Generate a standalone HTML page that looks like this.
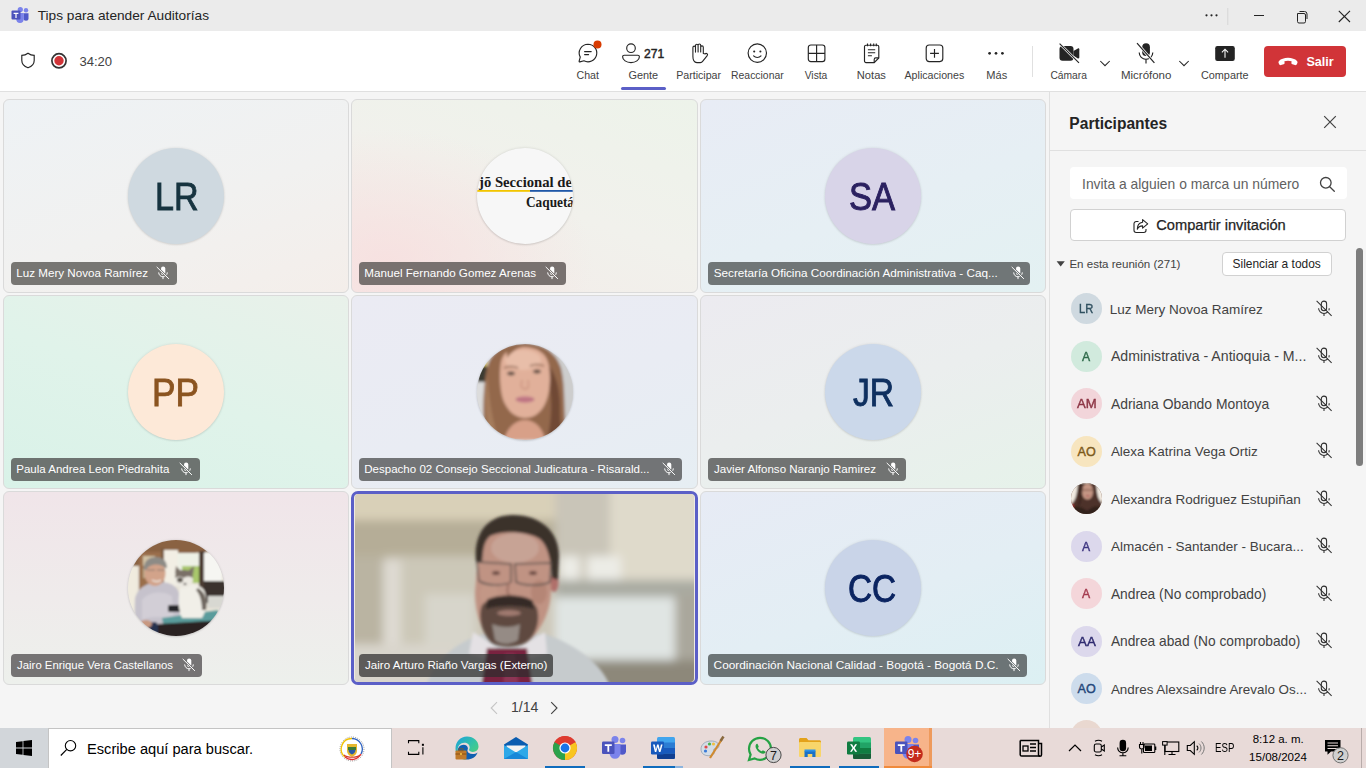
<!DOCTYPE html>
<html><head><meta charset="utf-8">
<style>
*{box-sizing:border-box}
html,body{margin:0;padding:0}
body{width:1366px;height:768px;overflow:hidden;position:relative;background:#f5f5f5;font-family:"Liberation Sans",sans-serif;color:#242424}
.a{position:absolute;display:block}
.t{position:absolute;white-space:pre}
</style></head><body>
<div class="a" style="left:0px;top:0px;width:1366px;height:31px;background:#ebebeb"></div>
<svg class="a" style="left:11px;top:7px;" width="18" height="16" viewBox="0 0 18 16"><circle cx="15" cy="3.2" r="2.2" fill="#7b83eb"/><path d="M12.5 6.2h5v5a2.5 2.5 0 0 1-5 0z" fill="#5059c9"/><circle cx="9.3" cy="2.6" r="2.6" fill="#7b83eb"/><path d="M5.5 6h7.2v6.2a3.7 3.7 0 0 1-7.4 0z" fill="#7b83eb"/><rect x="0.5" y="3.6" width="9" height="9" rx="1" fill="#4b53bc"/><path d="M2.6 5.8h4.8v1.1H5.6v4H4.4v-4H2.6z" fill="#fff"/></svg>
<div class="t" style="left:37.73px;top:8.80px;font-size:13.68px;line-height:13.68px;color:#242424;font-weight:400;font-family:'Liberation Sans',sans-serif;">Tips para atender Auditorías</div>
<svg class="a" style="left:1200px;top:8px" width="166" height="18" viewBox="0 0 166 18"><circle cx="6.5" cy="7.3" r="1.1" fill="#242424"/><circle cx="11.5" cy="7.3" r="1.1" fill="#242424"/><circle cx="16.5" cy="7.3" r="1.1" fill="#242424"/><rect x="27.3" y="-3" width="1" height="20" fill="#d6d6d6"/><rect x="54" y="7" width="10" height="1" fill="#242424"/><path d="M97.5 5.5h6.5a1.5 1.5 0 0 1 1.5 1.5v6.5a1.5 1.5 0 0 1-1.5 1.5h-5a1.5 1.5 0 0 1-1.5-1.5z" fill="none" stroke="#242424" stroke-width="1"/><path d="M99.5 3.5h5a2.5 2.5 0 0 1 2.5 2.5v5" fill="none" stroke="#242424" stroke-width="1"/><path d="M138.8 2.8l11.2 11.2M150 2.8l-11.2 11.2" stroke="#242424" stroke-width="1.1"/></svg>
<div class="a" style="left:0px;top:31px;width:1366px;height:60px;background:#fff"></div>
<div class="a" style="left:0px;top:91px;width:1366px;height:1px;background:#e0e0e0"></div>
<svg class="a" style="left:20px;top:52px;" width="16" height="17" viewBox="0 0 16 17"><path d="M8 1.2c1.8 1.3 3.8 2.1 6.2 2.2v5c0 3.6-2.3 5.9-6.2 7.4C4.1 14.3 1.8 12 1.8 8.4v-5C4.2 3.3 6.2 2.5 8 1.2z" fill="none" stroke="#242424" stroke-width="1.15"/></svg>
<svg class="a" style="left:50px;top:52px;" width="18" height="18" viewBox="0 0 18 18"><circle cx="9" cy="8.8" r="7.1" fill="none" stroke="#333" stroke-width="1.7"/><circle cx="9" cy="8.8" r="4.7" fill="#d13438"/></svg>
<div class="t" style="left:79.41px;top:54.80px;font-size:13.09px;line-height:13.09px;color:#424242;font-weight:400;font-family:'Liberation Sans',sans-serif;">34:20</div>
<div class="t" style="left:576.47px;top:69.70px;font-size:10.61px;line-height:10.61px;color:#424242;font-weight:400;font-family:'Liberation Sans',sans-serif;">Chat</div>
<div class="t" style="left:628.45px;top:69.70px;font-size:10.92px;line-height:10.92px;color:#424242;font-weight:400;font-family:'Liberation Sans',sans-serif;">Gente</div>
<div class="t" style="left:676.15px;top:69.70px;font-size:10.65px;line-height:10.65px;color:#424242;font-weight:400;font-family:'Liberation Sans',sans-serif;">Participar</div>
<div class="t" style="left:731.07px;top:70.70px;font-size:10.41px;line-height:10.41px;color:#424242;font-weight:400;font-family:'Liberation Sans',sans-serif;">Reaccionar</div>
<div class="t" style="left:804.70px;top:70.70px;font-size:10.28px;line-height:10.28px;color:#424242;font-weight:400;font-family:'Liberation Sans',sans-serif;">Vista</div>
<div class="t" style="left:856.81px;top:69.70px;font-size:11.15px;line-height:11.15px;color:#424242;font-weight:400;font-family:'Liberation Sans',sans-serif;">Notas</div>
<div class="t" style="left:904.50px;top:69.70px;font-size:10.65px;line-height:10.65px;color:#424242;font-weight:400;font-family:'Liberation Sans',sans-serif;">Aplicaciones</div>
<div class="t" style="left:986.31px;top:69.70px;font-size:11.07px;line-height:11.07px;color:#424242;font-weight:400;font-family:'Liberation Sans',sans-serif;">Más</div>
<div class="t" style="left:1050.39px;top:70.70px;font-size:10.28px;line-height:10.28px;color:#424242;font-weight:400;font-family:'Liberation Sans',sans-serif;">Cámara</div>
<div class="t" style="left:1120.98px;top:69.70px;font-size:11.49px;line-height:11.49px;color:#424242;font-weight:400;font-family:'Liberation Sans',sans-serif;">Micrófono</div>
<div class="t" style="left:1200.96px;top:69.70px;font-size:10.85px;line-height:10.85px;color:#424242;font-weight:400;font-family:'Liberation Sans',sans-serif;">Comparte</div>
<svg class="a" style="left:577px;top:42px;" width="22" height="22" viewBox="0 0 22 22"><path d="M11 2.2a8.8 8.8 0 1 1-4.1 16.6l-4 1.1a.6.6 0 0 1-.75-.74l1.1-4.05A8.8 8.8 0 0 1 11 2.2z" fill="none" stroke="#242424" stroke-width="1.15"/><path d="M7.6 9.6h6.6M7.6 12.6h4" stroke="#242424" stroke-width="1.15" stroke-linecap="round"/></svg>
<svg class="a" style="left:593px;top:40px;" width="9" height="9" viewBox="0 0 9 9"><circle cx="4.5" cy="4.5" r="4" fill="#d83b01"/></svg>
<svg class="a" style="left:621px;top:42px;" width="20" height="22" viewBox="0 0 20 22"><circle cx="10" cy="6.2" r="4.3" fill="none" stroke="#242424" stroke-width="1.15"/><path d="M3.2 13.2h13.6c.9 0 1.6.7 1.6 1.6 0 3.2-3.8 5.8-8.4 5.8s-8.4-2.6-8.4-5.8c0-.9.7-1.6 1.6-1.6z" fill="none" stroke="#242424" stroke-width="1.15"/></svg>
<div class="t" style="left:644.10px;top:48.00px;font-size:12.08px;line-height:12.08px;color:#242424;font-weight:400;font-family:'Liberation Sans',sans-serif;-webkit-text-stroke:0.45px #242424;">271</div>
<div class="a" style="left:621px;top:87px;width:45px;height:3px;background:#5b5fc7;border-radius:2px"></div>
<svg class="a" style="left:690px;top:42px;" width="20" height="22" viewBox="0 0 20 22"><g transform="translate(19.5,0) scale(-1,1)"><path d="M6.2 11.5V5.2a1.3 1.3 0 0 1 2.6 0V10V3.3a1.3 1.3 0 0 1 2.6 0V10V3.6a1.3 1.3 0 0 1 2.6 0v6.5V5.4a1.3 1.3 0 0 1 2.6 0v9.2c0 2.9-1.2 6-4 6H9.2c-1.1 0-1.9-.6-2.5-1.5L2.3 13.6a1.3 1.3 0 0 1 2-1.7z" fill="none" stroke="#242424" stroke-width="1.1" stroke-linejoin="round"/></g></svg>
<svg class="a" style="left:747px;top:43px;" width="21" height="21" viewBox="0 0 21 21"><circle cx="10.3" cy="10.1" r="9.2" fill="none" stroke="#242424" stroke-width="1.15"/><circle cx="7.2" cy="8.5" r="1.05" fill="#242424"/><circle cx="13.4" cy="8.5" r="1.05" fill="#242424"/><path d="M6.6 12.9c1 1.1 2.3 1.6 3.7 1.6s2.7-.5 3.7-1.6" fill="none" stroke="#242424" stroke-width="1.15" stroke-linecap="round"/></svg>
<svg class="a" style="left:807px;top:44px;" width="19" height="19" viewBox="0 0 19 19"><rect x="1.3" y="1" width="16.6" height="16.6" rx="2.6" fill="none" stroke="#242424" stroke-width="1.15"/><path d="M9.6 1v16.6M1.3 9.3h16.6" stroke="#242424" stroke-width="1.15"/></svg>
<svg class="a" style="left:863px;top:42px;" width="18" height="22" viewBox="0 0 18 22"><path d="M3 3.2h11.3c.8 0 1.5.7 1.5 1.5v11.2l-4.6 4.7H3c-.8 0-1.5-.7-1.5-1.5V4.7c0-.8.7-1.5 1.5-1.5z" fill="none" stroke="#242424" stroke-width="1.15"/><path d="M15.8 15.9h-3.1c-.8 0-1.5.7-1.5 1.5v3.2" fill="none" stroke="#242424" stroke-width="1.1"/><path d="M4.5 1.6v2.6M7.6 1.6v2.6M10.7 1.6v2.6M13.3 1.6v2.6" stroke="#242424" stroke-width="1.1"/><path d="M4.9 7.8h7.3M4.9 10.8h7.3M4.9 13.8h4" stroke="#242424" stroke-width="1.1"/></svg>
<svg class="a" style="left:925px;top:44px;" width="19" height="19" viewBox="0 0 19 19"><rect x="1.2" y="1" width="16.6" height="16.6" rx="3" fill="none" stroke="#242424" stroke-width="1.15"/><path d="M9.5 4.9v8.8M5.1 9.3h8.8" stroke="#242424" stroke-width="1.15"/></svg>
<svg class="a" style="left:986px;top:50px;" width="20" height="7" viewBox="0 0 20 7"><circle cx="3.6" cy="3.3" r="1.35" fill="#242424"/><circle cx="10" cy="3.3" r="1.35" fill="#242424"/><circle cx="16.4" cy="3.3" r="1.35" fill="#242424"/></svg>
<div class="a" style="left:1032px;top:46px;width:1px;height:31px;background:#e0e0e0"></div>
<svg class="a" style="left:1058px;top:42px;" width="23" height="23" viewBox="0 0 23 23"><rect x="1.5" y="4" width="14" height="14.7" rx="3" fill="#242424"/><path d="M15.5 9l4.4-2.6c.6-.3 1.4.1 1.4.8v8.4c0 .7-.8 1.1-1.4.8l-4.4-2.6z" fill="#242424"/><path d="M1.6 1.6l19.4 19.2" stroke="#fff" stroke-width="2.4"/><path d="M1.6 1.6l19.4 19.2" stroke="#242424" stroke-width="1.15"/></svg>
<svg class="a" style="left:1098px;top:58px;" width="14" height="10" viewBox="0 0 14 10"><path d="M2.3 3l4.7 4.7 4.7-4.7" fill="none" stroke="#242424" stroke-width="1.05"/></svg>
<svg class="a" style="left:1135px;top:42px;" width="23" height="23" viewBox="0 0 23 23"><rect x="7.2" y="1.3" width="7.7" height="12.8" rx="3.85" fill="#242424"/><path d="M4.2 10.5c0 3.8 3.1 6.8 6.8 6.8s6.8-3 6.8-6.8M11 17.3v4.2" fill="none" stroke="#242424" stroke-width="1.15"/><path d="M2 1.2l17.4 19.6" stroke="#fff" stroke-width="2.6"/><path d="M2 1.2l17.4 19.6" stroke="#242424" stroke-width="1.2"/></svg>
<svg class="a" style="left:1177px;top:58px;" width="14" height="10" viewBox="0 0 14 10"><path d="M2.3 3l4.7 4.7 4.7-4.7" fill="none" stroke="#242424" stroke-width="1.05"/></svg>
<svg class="a" style="left:1214px;top:45px;" width="22" height="17" viewBox="0 0 22 17"><rect x="1.2" y="1.1" width="19.6" height="14.8" rx="2.2" fill="#242424"/><path d="M11 12.8V4.4M7.9 7.3L11 4.2l3.1 3.1" fill="none" stroke="#fff" stroke-width="1.05"/></svg>
<div class="a" style="left:1264px;top:46px;width:82px;height:31px;background:#d13438;border-radius:4px"></div>
<svg class="a" style="left:1277px;top:56px;" width="22" height="11" viewBox="0 0 22 11"><path d="M11 1.8c3.8 0 7.2 1.3 9 3.1.6.6.7 1.3.4 2.1l-.6 1.3c-.3.7-1.1 1-1.8.8l-2.6-.8c-.7-.2-1.1-.9-1-1.6l.2-1.4C13.5 4.9 12.3 4.7 11 4.7s-2.5.2-3.6.6l.2 1.4c.1.7-.3 1.4-1 1.6l-2.6.8c-.7.2-1.5-.1-1.8-.8L1.6 7c-.3-.8-.2-1.5.4-2.1 1.8-1.8 5.2-3.1 9-3.1z" fill="#fff"/></svg>
<div class="t" style="left:1306.45px;top:56.00px;font-size:12.62px;line-height:12.62px;color:#fff;font-weight:700;font-family:'Liberation Sans',sans-serif;">Salir</div>
<div class="a" style="left:3px;top:99px;width:346px;height:194px;background:linear-gradient(160deg,#eef2f5 0%,#f1f1f0 55%,#f4eeea 100%);border:1px solid #dadada;border-radius:6px"></div>
<div class="a" style="left:128.0px;top:148.0px;width:96px;height:96px;border-radius:50%;background:#cfd9e0;box-shadow:0 0 3px rgba(0,0,0,.10),0 1px 2px rgba(0,0,0,.08)"></div>
<div class="t" style="left:154.87px;top:177.60px;font-size:38px;line-height:38px;color:#173440;font-weight:400;font-family:'Liberation Sans',sans-serif;transform:scaleX(0.8968);transform-origin:0 0;-webkit-text-stroke:0.9px #173440;">LR</div>
<div class="a" style="left:11px;top:261.6px;width:165.6px;height:23.4px;background:#777673;border-radius:4px"></div>
<div class="t" style="left:16.27px;top:267.40px;font-size:11.63px;line-height:11.63px;color:#fff;font-weight:400;font-family:'Liberation Sans',sans-serif;">Luz Mery Novoa Ramírez</div>
<svg class="a" style="left:156px;top:265.9px;" width="14" height="14" viewBox="0 0 14 14"><rect x="5" y="0.4" width="4.3" height="8.8" rx="2.15" fill="#fff"/><path d="M2.7 6.4c0 2.5 1.9 4.4 4.3 4.4s4.3-1.9 4.3-4.4M7 10.8v2.3" fill="none" stroke="#fff" stroke-width="1.0"/><path d="M0.7 0.9L12.9 12.9" stroke="#777673" stroke-width="2.2"/><path d="M0.7 0.9L12.9 12.9" stroke="#fff" stroke-width="1.0"/></svg>
<div class="a" style="left:351px;top:99px;width:347px;height:194px;background:radial-gradient(ellipse 60% 70% at 10% 85%,rgba(248,222,222,.8),rgba(248,222,222,0)),linear-gradient(200deg,#edf3ea 0%,#f1f1ec 50%,#f3ebe8 100%);border:1px solid #dadada;border-radius:6px"></div>
<div class="a" style="left:476.5px;top:148.0px;width:96px;height:96px;border-radius:50%;overflow:hidden;box-shadow:0 0 3px rgba(0,0,0,.12),0 1px 2px rgba(0,0,0,.1);background:#f7f7f7"><svg width="96" height="96" viewBox="0 0 96 96" style="display:block"><text x="95" y="39" text-anchor="end" font-family="Liberation Serif" font-weight="bold" font-size="15.5" fill="#1a1a1a" textLength="93" lengthAdjust="spacingAndGlyphs">jõ Seccional de</text><rect x="0" y="42" width="53" height="1.8" fill="#f2c500"/><rect x="53" y="42" width="45" height="1.8" fill="#1f57a8"/><text x="97" y="59" text-anchor="end" font-family="Liberation Serif" font-weight="bold" font-size="15.5" fill="#1a1a1a" textLength="48" lengthAdjust="spacingAndGlyphs">Caquetá</text></svg></div>
<div class="a" style="left:359px;top:261.6px;width:206.8px;height:23.4px;background:#78716f;border-radius:4px"></div>
<div class="t" style="left:364.27px;top:267.40px;font-size:11.66px;line-height:11.66px;color:#fff;font-weight:400;font-family:'Liberation Sans',sans-serif;">Manuel Fernando Gomez Arenas</div>
<svg class="a" style="left:545px;top:265.9px;" width="14" height="14" viewBox="0 0 14 14"><rect x="5" y="0.4" width="4.3" height="8.8" rx="2.15" fill="#fff"/><path d="M2.7 6.4c0 2.5 1.9 4.4 4.3 4.4s4.3-1.9 4.3-4.4M7 10.8v2.3" fill="none" stroke="#fff" stroke-width="1.0"/><path d="M0.7 0.9L12.9 12.9" stroke="#78716f" stroke-width="2.2"/><path d="M0.7 0.9L12.9 12.9" stroke="#fff" stroke-width="1.0"/></svg>
<div class="a" style="left:700px;top:99px;width:346px;height:194px;background:linear-gradient(160deg,#e8ecf5 0%,#e6eff4 55%,#e3f1f2 100%);border:1px solid #dadada;border-radius:6px"></div>
<div class="a" style="left:825.0px;top:148.0px;width:96px;height:96px;border-radius:50%;background:#d8d4e8;box-shadow:0 0 3px rgba(0,0,0,.10),0 1px 2px rgba(0,0,0,.08)"></div>
<div class="t" style="left:849.12px;top:177.60px;font-size:38px;line-height:38px;color:#2b2160;font-weight:400;font-family:'Liberation Sans',sans-serif;transform:scaleX(0.9090);transform-origin:0 0;-webkit-text-stroke:0.9px #2b2160;">SA</div>
<div class="a" style="left:708px;top:261.6px;width:321.9px;height:23.4px;background:#707677;border-radius:4px"></div>
<div class="t" style="left:713.73px;top:267.40px;font-size:11.73px;line-height:11.73px;color:#fff;font-weight:400;font-family:'Liberation Sans',sans-serif;">Secretaría Oficina Coordinación Administrativa - Caq...</div>
<svg class="a" style="left:1011px;top:265.9px;" width="14" height="14" viewBox="0 0 14 14"><rect x="5" y="0.4" width="4.3" height="8.8" rx="2.15" fill="#fff"/><path d="M2.7 6.4c0 2.5 1.9 4.4 4.3 4.4s4.3-1.9 4.3-4.4M7 10.8v2.3" fill="none" stroke="#fff" stroke-width="1.0"/><path d="M0.7 0.9L12.9 12.9" stroke="#707677" stroke-width="2.2"/><path d="M0.7 0.9L12.9 12.9" stroke="#fff" stroke-width="1.0"/></svg>
<div class="a" style="left:3px;top:295px;width:346px;height:194px;background:linear-gradient(200deg,#e9f1ea 0%,#e0f3ea 50%,#d9f2e8 100%);border:1px solid #dadada;border-radius:6px"></div>
<div class="a" style="left:128.0px;top:344.0px;width:96px;height:96px;border-radius:50%;background:#fde9d8;box-shadow:0 0 3px rgba(0,0,0,.10),0 1px 2px rgba(0,0,0,.08)"></div>
<div class="t" style="left:152.49px;top:373.60px;font-size:38px;line-height:38px;color:#8b5420;font-weight:400;font-family:'Liberation Sans',sans-serif;transform:scaleX(0.9244);transform-origin:0 0;-webkit-text-stroke:0.9px #8b5420;">PP</div>
<div class="a" style="left:11px;top:457.6px;width:188.7px;height:23.4px;background:#6d7370;border-radius:4px"></div>
<div class="t" style="left:16.28px;top:464.40px;font-size:11.52px;line-height:11.52px;color:#fff;font-weight:400;font-family:'Liberation Sans',sans-serif;">Paula Andrea Leon Piedrahita</div>
<svg class="a" style="left:179px;top:461.9px;" width="14" height="14" viewBox="0 0 14 14"><rect x="5" y="0.4" width="4.3" height="8.8" rx="2.15" fill="#fff"/><path d="M2.7 6.4c0 2.5 1.9 4.4 4.3 4.4s4.3-1.9 4.3-4.4M7 10.8v2.3" fill="none" stroke="#fff" stroke-width="1.0"/><path d="M0.7 0.9L12.9 12.9" stroke="#6d7370" stroke-width="2.2"/><path d="M0.7 0.9L12.9 12.9" stroke="#fff" stroke-width="1.0"/></svg>
<div class="a" style="left:351px;top:295px;width:347px;height:194px;background:linear-gradient(160deg,#ebebf3 0%,#e9ecf3 55%,#e6eef3 100%);border:1px solid #dadada;border-radius:6px"></div>
<div class="a" style="left:476.5px;top:344.0px;width:96px;height:96px;border-radius:50%;overflow:hidden;box-shadow:0 0 3px rgba(0,0,0,.12),0 1px 2px rgba(0,0,0,.1);background:#d6d6d6"><svg width="96" height="96" viewBox="0 0 96 96" style="display:block"><defs><filter id="wb" x="-10%" y="-10%" width="120%" height="120%"><feGaussianBlur stdDeviation="1.4"/></filter></defs><g filter="url(#wb)"><rect x="-5" y="-5" width="106" height="106" fill="#dcdcdc"/><rect x="78" y="-5" width="25" height="106" fill="#cdcdcd"/><rect x="0" y="12" width="10" height="10" fill="#d8c050"/><rect x="0" y="22" width="10" height="16" fill="#3a3a32"/><path d="M8 96 C5 70 6 40 11 20 C16 6 30 -1 46 -1 C64 -1 78 6 84 24 C89 44 86 70 90 96 Z" fill="#93684c"/><path d="M70 20 C80 30 84 50 83 70 C83 82 86 90 88 96 L70 96 C74 80 76 60 72 40 Z" fill="#6f4a36"/><path d="M10 30 C12 50 14 70 20 90 L14 96 C8 80 7 50 10 30 Z" fill="#a57b5c"/><path d="M27 96 C30 84 38 76 48 76 C58 76 66 84 68 96 Z" fill="#d8a088"/><path d="M24 18 C26 8 34 3 46 3 C60 3 70 9 72 22 C74 34 73 50 68 60 C63 70 56 74 48 74 C40 74 32 69 27 58 C23 48 22 30 24 18 Z" fill="#e1b09a"/><ellipse cx="46" cy="16" rx="18" ry="10" fill="#e8bea9"/><path d="M30 6 C36 2 42 1 46 3 C40 4 34 8 30 14 Z" fill="#93684c"/><path d="M27 24 Q34 21 41 24" stroke="#8a6450" stroke-width="1.4" fill="none"/><path d="M53 22 Q60 19 67 22" stroke="#8a6450" stroke-width="1.4" fill="none"/><ellipse cx="34" cy="29.5" rx="3.8" ry="1.9" fill="#5f4e44"/><ellipse cx="60" cy="27.5" rx="3.8" ry="1.9" fill="#5f4e44"/><path d="M45 36 C44 41 43 44 48 45 C52 45 52 42 51 36" fill="none" stroke="#cc9480" stroke-width="1.4"/><ellipse cx="48" cy="55.5" rx="9.5" ry="3.2" fill="#c47c8a"/><path d="M39 55 Q48 57 57 55" stroke="#a85a6a" stroke-width=".8" fill="none"/></g></svg></div>
<div class="a" style="left:359px;top:457.6px;width:322.9px;height:23.4px;background:#727476;border-radius:4px"></div>
<div class="t" style="left:364.28px;top:464.40px;font-size:11.54px;line-height:11.54px;color:#fff;font-weight:400;font-family:'Liberation Sans',sans-serif;">Despacho 02 Consejo Seccional Judicatura - Risarald...</div>
<svg class="a" style="left:662px;top:461.9px;" width="14" height="14" viewBox="0 0 14 14"><rect x="5" y="0.4" width="4.3" height="8.8" rx="2.15" fill="#fff"/><path d="M2.7 6.4c0 2.5 1.9 4.4 4.3 4.4s4.3-1.9 4.3-4.4M7 10.8v2.3" fill="none" stroke="#fff" stroke-width="1.0"/><path d="M0.7 0.9L12.9 12.9" stroke="#727476" stroke-width="2.2"/><path d="M0.7 0.9L12.9 12.9" stroke="#fff" stroke-width="1.0"/></svg>
<div class="a" style="left:700px;top:295px;width:346px;height:194px;background:linear-gradient(160deg,#ecebf0 0%,#ebeeee 50%,#e6f2ea 100%);border:1px solid #dadada;border-radius:6px"></div>
<div class="a" style="left:825.0px;top:344.0px;width:96px;height:96px;border-radius:50%;background:#cbd8ea;box-shadow:0 0 3px rgba(0,0,0,.10),0 1px 2px rgba(0,0,0,.08)"></div>
<div class="t" style="left:852.66px;top:373.60px;font-size:38px;line-height:38px;color:#0f3060;font-weight:400;font-family:'Liberation Sans',sans-serif;transform:scaleX(0.8839);transform-origin:0 0;-webkit-text-stroke:0.9px #0f3060;">JR</div>
<div class="a" style="left:708px;top:457.6px;width:197.9px;height:23.4px;background:#717372;border-radius:4px"></div>
<div class="t" style="left:714.08px;top:464.40px;font-size:11.57px;line-height:11.57px;color:#fff;font-weight:400;font-family:'Liberation Sans',sans-serif;">Javier Alfonso Naranjo Ramirez</div>
<svg class="a" style="left:885.5px;top:461.9px;" width="14" height="14" viewBox="0 0 14 14"><rect x="5" y="0.4" width="4.3" height="8.8" rx="2.15" fill="#fff"/><path d="M2.7 6.4c0 2.5 1.9 4.4 4.3 4.4s4.3-1.9 4.3-4.4M7 10.8v2.3" fill="none" stroke="#fff" stroke-width="1.0"/><path d="M0.7 0.9L12.9 12.9" stroke="#717372" stroke-width="2.2"/><path d="M0.7 0.9L12.9 12.9" stroke="#fff" stroke-width="1.0"/></svg>
<div class="a" style="left:3px;top:491px;width:346px;height:194px;background:linear-gradient(180deg,#f0e5e9 0%,#efebeb 55%,#edf0ec 100%);border:1px solid #dadada;border-radius:6px"></div>
<div class="a" style="left:128.0px;top:540.0px;width:96px;height:96px;border-radius:50%;overflow:hidden;box-shadow:0 0 3px rgba(0,0,0,.12),0 1px 2px rgba(0,0,0,.1);background:#ddd"><svg width="96" height="96" viewBox="0 0 96 96" style="display:block"><defs><filter id="cb" x="-10%" y="-10%" width="120%" height="120%"><feGaussianBlur stdDeviation="1.1"/></filter></defs><g filter="url(#cb)"><rect x="-5" y="-5" width="106" height="106" fill="#e9e4d8"/><path d="M-5 -5 H101 V12 C80 10 60 14 40 16 C28 17 18 20 10 26 L-5 30 Z" fill="#8a6242"/><rect x="11" y="12" width="24" height="38" fill="#9a6e4c"/><rect x="15" y="16" width="12" height="10" fill="#d2c2a4"/><rect x="15" y="28" width="12" height="10" fill="#bba888"/><rect x="-5" y="26" width="14" height="70" fill="#f0ebde"/><rect x="36" y="10" width="14" height="36" fill="#f2eee4"/><rect x="33" y="8" width="3" height="40" fill="#7a5a40"/><rect x="50" y="13" width="42" height="30" fill="#eef1e6"/><rect x="54" y="26" width="19" height="17" fill="#a9c86c"/><rect x="71" y="11" width="6" height="50" fill="#4b3b30"/><rect x="76" y="13" width="18" height="28" fill="#f6f6f2"/><rect x="76" y="41" width="24" height="22" fill="#3b332e"/><rect x="80" y="56" width="20" height="12" fill="#d8d8d2"/><path d="M6 96 L7 58 C10 47 20 42 32 42 C44 42 51 47 52 58 L52 96 Z" fill="#c6c2cc"/><path d="M14 60 C20 52 34 50 44 56 L46 80 C36 76 22 76 14 80 Z" fill="#d2ced6"/><ellipse cx="27" cy="33" rx="10.5" ry="13" fill="#d2a38a"/><path d="M16 30 C15 21 21 17 28 17 C35 17 39 21 39 28 L37 28 C33 23 22 23 18 30 Z" fill="#8d8b86"/><path d="M19 30 h8 M29 30 h8" stroke="#8a7a70" stroke-width="1.2"/><path d="M24 40 Q29 43 33 40" stroke="#f0e8e0" stroke-width="1.4" fill="none"/><path d="M12 96 C12 86 18 82 28 82 L38 96 Z" fill="#283250"/><ellipse cx="18" cy="84" rx="6" ry="4" fill="#c89880"/><path d="M34 78 L90 70 L94 86 L36 88 Z" fill="#5a9c9c"/><path d="M30 84 L96 80 L96 100 L30 100 Z" fill="#2b2420"/><rect x="40" y="65" width="14" height="7" rx="2" fill="#28282c"/><path d="M52 48 C50 58 50 70 54 78 L74 78 C79 70 80 58 76 50 C72 44 60 42 52 48 Z" fill="#f1efe8"/><path d="M70 48 C77 52 80 60 78 70 L74 70 C74 62 72 54 68 50 Z" fill="#6e665e"/><ellipse cx="56" cy="40" rx="9" ry="8" fill="#ece9e2"/><path d="M47 38 C47 32 51 30 56 30 C61 30 65 32 65 38 C62 36 58 36 56 38 C53 36 50 36 47 38 Z" fill="#7a7068"/><path d="M47 34 L48 26 L53 31 Z M60 31 L66 26 L65 35 Z" fill="#7a7068"/><ellipse cx="52" cy="40" rx="3" ry="2.4" fill="#5a524c"/><ellipse cx="57" cy="44" rx="1.5" ry="1" fill="#3a3030"/></g></svg></div>
<div class="a" style="left:11px;top:653.6px;width:190.7px;height:23.4px;background:#757374;border-radius:4px"></div>
<div class="t" style="left:17.09px;top:660.40px;font-size:11.37px;line-height:11.37px;color:#fff;font-weight:400;font-family:'Liberation Sans',sans-serif;">Jairo Enrique Vera Castellanos</div>
<svg class="a" style="left:182px;top:657.9px;" width="14" height="14" viewBox="0 0 14 14"><rect x="5" y="0.4" width="4.3" height="8.8" rx="2.15" fill="#fff"/><path d="M2.7 6.4c0 2.5 1.9 4.4 4.3 4.4s4.3-1.9 4.3-4.4M7 10.8v2.3" fill="none" stroke="#fff" stroke-width="1.0"/><path d="M0.7 0.9L12.9 12.9" stroke="#757374" stroke-width="2.2"/><path d="M0.7 0.9L12.9 12.9" stroke="#fff" stroke-width="1.0"/></svg>
<div class="a" style="left:351px;top:491px;width:347px;height:194px;border:3px solid #5b5fc7;border-radius:7px;background:#eeeae2"></div>
<div class="a" style="left:355px;top:494px;width:339px;height:188px;border-radius:4px;overflow:hidden;background:#d0cabb"><svg width="339" height="188" viewBox="0 0 339 188" preserveAspectRatio="none" style="display:block"><defs><filter id="bl" x="-20%" y="-20%" width="140%" height="140%"><feGaussianBlur stdDeviation="5"/></filter><filter id="bl2" x="-20%" y="-20%" width="140%" height="140%"><feGaussianBlur stdDeviation="1.8"/></filter><filter id="bl3" x="-20%" y="-20%" width="140%" height="140%"><feGaussianBlur stdDeviation="1.4"/></filter></defs><g filter="url(#bl)"><rect x="-20" y="-20" width="380" height="230" fill="#cdc8b9"/><rect x="-20" y="-20" width="240" height="48" fill="#d9d0b8"/><rect x="-20" y="26" width="230" height="36" fill="#b5ad97"/><rect x="-20" y="62" width="50" height="100" fill="#bab4a2"/><rect x="28" y="66" width="18" height="92" fill="#dedad2"/><rect x="46" y="66" width="75" height="90" fill="#ccc8b8"/><rect x="70" y="100" width="50" height="60" fill="#d7d5cb"/><rect x="-20" y="150" width="120" height="50" fill="#d9d5cc"/><rect x="200" y="-20" width="60" height="85" fill="#c9c5b8"/><rect x="255" y="-20" width="100" height="110" fill="#dfdacb"/><rect x="205" y="62" width="20" height="26" fill="#ecece6"/><rect x="232" y="62" width="34" height="26" fill="#ecece6"/><rect x="200" y="86" width="160" height="17" fill="#a9aaa1"/><rect x="200" y="103" width="130" height="63" fill="#e0e5e3"/><rect x="320" y="100" width="40" height="90" fill="#aaa79c"/><rect x="230" y="166" width="130" height="40" fill="#8d887a"/></g><g filter="url(#bl2)"><path d="M70 195 C78 168 100 148 128 140 L190 140 C220 150 248 170 256 195 Z" fill="#c6cbcd"/><path d="M118 138 L152 160 L190 138 L192 160 L150 170 L114 160 Z" fill="#e4e1e4"/><path d="M132 154 L172 154 L178 195 L126 195 Z" fill="#7a2341"/><path d="M150 160 L160 160 L164 195 L148 195 Z" fill="#9a4060" opacity=".6"/></g><g filter="url(#bl3)"><ellipse cx="199" cy="89" rx="4.5" ry="9" fill="#b0706a"/><path d="M123 62 C122 45 135 35 160 35 C183 35 196 46 196 64 L196 98 C195 118 186 138 172 148 C164 153 146 153 138 148 C126 138 120 118 120 98 Z" fill="#c09383"/><ellipse cx="160" cy="54" rx="24" ry="15" fill="#c8a597" opacity=".9"/><ellipse cx="134" cy="100" rx="9" ry="12" fill="#c49888" opacity=".7"/><ellipse cx="184" cy="98" rx="8" ry="12" fill="#b08070" opacity=".7"/><path d="M121 68 C118 40 132 21 158 21 C186 21 204 38 204 62 L203 86 L197 84 C196 66 193 52 185 45 C173 37 147 36 135 42 C128 48 128 58 127 68 Z" fill="#3b312b"/><path d="M122 68 L156 70 L156 88 C150 92 132 92 124 87 Z" fill="none" stroke="#5e5450" stroke-width="1.5"/><path d="M160 70 L196 69 L195 88 C188 92 168 92 161 88 Z" fill="none" stroke="#5e5450" stroke-width="1.5"/><ellipse cx="141" cy="79" rx="4" ry="2" fill="#6a4a42"/><ellipse cx="178" cy="79" rx="4" ry="2" fill="#6a4a42"/><path d="M154 88 C152 96 151 100 156 102" fill="none" stroke="#9a6e62" stroke-width="2"/><path d="M126 114 C128 106 140 103 154 104 C168 103 178 106 182 114 C186 128 180 144 170 149 C160 154 146 154 137 149 C129 142 123 128 126 114 Z" fill="#5e4a40"/><path d="M132 106 C142 100 168 100 178 107 L179 115 C166 111 144 111 131 115 Z" fill="#342a25"/><ellipse cx="154" cy="119" rx="12" ry="3" fill="#a07a70"/><path d="M137 130 C146 134 158 134 165 130 L163 146 C156 151 145 151 140 146 Z" fill="#a8a29c" opacity=".75"/></g></svg></div>
<div class="a" style="left:359px;top:653.6px;width:193.9px;height:23.4px;background:rgba(45,45,45,.72);border-radius:4px"></div>
<div class="t" style="left:365.08px;top:660.40px;font-size:11.57px;line-height:11.57px;color:#fff;font-weight:400;font-family:'Liberation Sans',sans-serif;">Jairo Arturo Riaño Vargas (Externo)</div>
<div class="a" style="left:700px;top:491px;width:346px;height:194px;background:linear-gradient(160deg,#e7ebf5 0%,#e3eef4 55%,#dcf0f3 100%);border:1px solid #dadada;border-radius:6px"></div>
<div class="a" style="left:825.0px;top:540.0px;width:96px;height:96px;border-radius:50%;background:#c9d4e8;box-shadow:0 0 3px rgba(0,0,0,.10),0 1px 2px rgba(0,0,0,.08)"></div>
<div class="t" style="left:848.33px;top:569.60px;font-size:38px;line-height:38px;color:#0b2461;font-weight:400;font-family:'Liberation Sans',sans-serif;transform:scaleX(0.8771);transform-origin:0 0;-webkit-text-stroke:0.9px #0b2461;">CC</div>
<div class="a" style="left:708px;top:653.6px;width:318.8px;height:23.4px;background:#6c7476;border-radius:4px"></div>
<div class="t" style="left:713.61px;top:660.40px;font-size:11.82px;line-height:11.82px;color:#fff;font-weight:400;font-family:'Liberation Sans',sans-serif;">Coordinación Nacional Calidad - Bogotá - Bogotá D.C.</div>
<svg class="a" style="left:1006.5px;top:657.9px;" width="14" height="14" viewBox="0 0 14 14"><rect x="5" y="0.4" width="4.3" height="8.8" rx="2.15" fill="#fff"/><path d="M2.7 6.4c0 2.5 1.9 4.4 4.3 4.4s4.3-1.9 4.3-4.4M7 10.8v2.3" fill="none" stroke="#fff" stroke-width="1.0"/><path d="M0.7 0.9L12.9 12.9" stroke="#6c7476" stroke-width="2.2"/><path d="M0.7 0.9L12.9 12.9" stroke="#fff" stroke-width="1.0"/></svg>
<svg class="a" style="left:489px;top:701px;" width="10" height="14" viewBox="0 0 10 14"><path d="M8 1.2L2.2 7 8 12.8" fill="none" stroke="#c4c4c4" stroke-width="1.1"/></svg>
<div class="t" style="left:511.02px;top:699.70px;font-size:14.05px;line-height:14.05px;color:#424242;font-weight:400;font-family:'Liberation Sans',sans-serif;">1/14</div>
<svg class="a" style="left:549px;top:701px;" width="10" height="14" viewBox="0 0 10 14"><path d="M2.2 1.2L8 7 2.2 12.8" fill="none" stroke="#424242" stroke-width="1.1"/></svg>
<div class="a" style="left:1049px;top:92px;width:1px;height:636px;background:#e0e0e0"></div>
<div class="a" style="left:1050px;top:150px;width:316px;height:1px;background:#e0e0e0"></div>
<div class="t" style="left:1069.37px;top:115.50px;font-size:15.57px;line-height:15.57px;color:#242424;font-weight:700;font-family:'Liberation Sans',sans-serif;">Participantes</div>
<svg class="a" style="left:1321px;top:113px;" width="18" height="18" viewBox="0 0 18 18"><path d="M3.2 3.2l11.6 11.6M14.8 3.2L3.2 14.8" stroke="#424242" stroke-width="1.2"/></svg>
<div class="a" style="left:1070px;top:167px;width:277px;height:32px;background:#fff;border-radius:4px"></div>
<div class="t" style="left:1082.05px;top:177.50px;font-size:13.86px;line-height:13.86px;color:#616161;font-weight:400;font-family:'Liberation Sans',sans-serif;">Invita a alguien o marca un número</div>
<svg class="a" style="left:1318px;top:175px;" width="18" height="18" viewBox="0 0 18 18"><circle cx="7.8" cy="7.8" r="5.3" fill="none" stroke="#424242" stroke-width="1.3"/><path d="M11.7 11.7l4.6 4.6" stroke="#424242" stroke-width="1.3" stroke-linecap="round"/></svg>
<div class="a" style="left:1070px;top:209px;width:276px;height:32px;background:#fff;border:1px solid #d1d1d1;border-radius:4px"></div>
<svg class="a" style="left:1132px;top:218px;" width="18" height="16" viewBox="0 0 18 16"><path d="M6.5 3.5H4.2c-1.2 0-2.2 1-2.2 2.2v6.6c0 1.2 1 2.2 2.2 2.2h7.6c1.2 0 2.2-1 2.2-2.2v-1.3" fill="none" stroke="#242424" stroke-width="1.1"/><path d="M10.6 1.6l5.1 4.3-5.1 4.3V7.9C8 7.9 6.2 8.9 5.3 11.2 5.3 7.3 7.5 4.8 10.6 4.3z" fill="none" stroke="#242424" stroke-width="1.1" stroke-linejoin="round"/></svg>
<div class="t" style="left:1156.27px;top:217.50px;font-size:14.66px;line-height:14.66px;color:#242424;font-weight:400;font-family:'Liberation Sans',sans-serif;-webkit-text-stroke:0.25px #242424;">Compartir invitación</div>
<svg class="a" style="left:1055px;top:259px;" width="12" height="10" viewBox="0 0 12 10"><path d="M1.6 2.2h8.2L5.7 7.6z" fill="#424242"/></svg>
<div class="t" style="left:1069.38px;top:258.60px;font-size:11.56px;line-height:11.56px;color:#424242;font-weight:400;font-family:'Liberation Sans',sans-serif;">En esta reunión (271)</div>
<div class="a" style="left:1222px;top:252px;width:110px;height:24px;background:#fff;border:1px solid #d1d1d1;border-radius:4px"></div>
<div class="t" style="left:1232.52px;top:259.00px;font-size:11.95px;line-height:11.95px;color:#242424;font-weight:400;font-family:'Liberation Sans',sans-serif;">Silenciar a todos</div>
<div class="a" style="left:1356px;top:248px;width:7px;height:218px;background:#7d7d7d;border-radius:4px"></div>
<div class="a" style="left:1071px;top:293.0px;width:31px;height:31px;background:#cfd9e0;border-radius:50%"></div>
<div class="t" style="left:1079.06px;top:303.30px;font-size:12.6px;line-height:12.6px;color:#305060;font-weight:400;font-family:'Liberation Sans',sans-serif;transform:scaleX(0.8855);transform-origin:0 0;-webkit-text-stroke:0.4px #305060;">LR</div>
<div class="t" style="left:1109.82px;top:302.50px;font-size:13.51px;line-height:13.51px;color:#424242;font-weight:400;font-family:'Liberation Sans',sans-serif;">Luz Mery Novoa Ramírez</div>
<svg class="a" style="left:1316px;top:299.5px;" width="17" height="17" viewBox="0 0 17 17"><rect x="5.3" y="1.1" width="5.3" height="9.6" rx="2.65" fill="none" stroke="#2e2e2e" stroke-width="1.05"/><path d="M2.6 8.3c0 2.9 2.4 5.1 5.4 5.1 1.5 0 2.9-.6 3.8-1.6M12.9 10.4c.2-.6.3-1.3.3-2.1M8 13.4V16" fill="none" stroke="#2e2e2e" stroke-width="1.05"/><path d="M0.6 0.9L15.6 15.9" stroke="#2e2e2e" stroke-width="1.05"/></svg>
<div class="a" style="left:1071px;top:340.5px;width:31px;height:31px;background:#d1eadd;border-radius:50%"></div>
<div class="t" style="left:1082.30px;top:350.80px;font-size:12.6px;line-height:12.6px;color:#2f6a4a;font-weight:400;font-family:'Liberation Sans',sans-serif;transform:scaleX(0.9713);transform-origin:0 0;-webkit-text-stroke:0.4px #2f6a4a;">A</div>
<div class="t" style="left:1110.90px;top:349.00px;font-size:14.14px;line-height:14.14px;color:#424242;font-weight:400;font-family:'Liberation Sans',sans-serif;">Administrativa - Antioquia - M...</div>
<svg class="a" style="left:1316px;top:347.0px;" width="17" height="17" viewBox="0 0 17 17"><rect x="5.3" y="1.1" width="5.3" height="9.6" rx="2.65" fill="none" stroke="#2e2e2e" stroke-width="1.05"/><path d="M2.6 8.3c0 2.9 2.4 5.1 5.4 5.1 1.5 0 2.9-.6 3.8-1.6M12.9 10.4c.2-.6.3-1.3.3-2.1M8 13.4V16" fill="none" stroke="#2e2e2e" stroke-width="1.05"/><path d="M0.6 0.9L15.6 15.9" stroke="#2e2e2e" stroke-width="1.05"/></svg>
<div class="a" style="left:1071px;top:388.0px;width:31px;height:31px;background:#f2d5da;border-radius:50%"></div>
<div class="t" style="left:1077.05px;top:398.30px;font-size:12.6px;line-height:12.6px;color:#8c3444;font-weight:400;font-family:'Liberation Sans',sans-serif;transform:scaleX(1.0400);transform-origin:0 0;-webkit-text-stroke:0.4px #8c3444;">AM</div>
<div class="t" style="left:1110.90px;top:397.50px;font-size:13.9px;line-height:13.9px;color:#424242;font-weight:400;font-family:'Liberation Sans',sans-serif;">Adriana Obando Montoya</div>
<svg class="a" style="left:1316px;top:394.5px;" width="17" height="17" viewBox="0 0 17 17"><rect x="5.3" y="1.1" width="5.3" height="9.6" rx="2.65" fill="none" stroke="#2e2e2e" stroke-width="1.05"/><path d="M2.6 8.3c0 2.9 2.4 5.1 5.4 5.1 1.5 0 2.9-.6 3.8-1.6M12.9 10.4c.2-.6.3-1.3.3-2.1M8 13.4V16" fill="none" stroke="#2e2e2e" stroke-width="1.05"/><path d="M0.6 0.9L15.6 15.9" stroke="#2e2e2e" stroke-width="1.05"/></svg>
<div class="a" style="left:1071px;top:435.5px;width:31px;height:31px;background:#f7e5bf;border-radius:50%"></div>
<div class="t" style="left:1077.60px;top:445.80px;font-size:12.6px;line-height:12.6px;color:#7d5a1a;font-weight:400;font-family:'Liberation Sans',sans-serif;-webkit-text-stroke:0.4px #7d5a1a;">AO</div>
<div class="t" style="left:1110.90px;top:445.00px;font-size:13.48px;line-height:13.48px;color:#424242;font-weight:400;font-family:'Liberation Sans',sans-serif;">Alexa Katrina Vega Ortiz</div>
<svg class="a" style="left:1316px;top:442.0px;" width="17" height="17" viewBox="0 0 17 17"><rect x="5.3" y="1.1" width="5.3" height="9.6" rx="2.65" fill="none" stroke="#2e2e2e" stroke-width="1.05"/><path d="M2.6 8.3c0 2.9 2.4 5.1 5.4 5.1 1.5 0 2.9-.6 3.8-1.6M12.9 10.4c.2-.6.3-1.3.3-2.1M8 13.4V16" fill="none" stroke="#2e2e2e" stroke-width="1.05"/><path d="M0.6 0.9L15.6 15.9" stroke="#2e2e2e" stroke-width="1.05"/></svg>
<div class="a" style="left:1071px;top:483.0px;width:31px;height:31px;border-radius:50%;overflow:hidden;background:#6b4a3a"><svg width="31" height="31" viewBox="0 0 31 31"><defs><filter id="pb" x="-10%" y="-10%" width="120%" height="120%"><feGaussianBlur stdDeviation=".8"/></filter></defs><g filter="url(#pb)"><rect x="-2" y="-2" width="35" height="35" fill="#f2ebe2"/><path d="M7 0 H25 C26 8 26 16 31 20 V33 H0 V21 C5 18 6 10 7 0 Z" fill="#4d3329"/><path d="M0 24 C6 22 12 24 16 28 C20 24 26 22 31 24 V33 H0 Z" fill="#33241e"/><ellipse cx="16.5" cy="8.5" rx="5.6" ry="8" fill="#c49684"/><path d="M10.5 7h12" stroke="#5a3a30" stroke-width="1" opacity=".7"/><ellipse cx="16.8" cy="12.8" rx="2.2" ry=".9" fill="#b06060"/><path d="M11 0 C12 6 11 14 9 22 L7 22 C9 14 9 6 8 0Z" fill="#3a2620"/><path d="M0 20 L3 22 L2 26 L0 26Z" fill="#b02830"/></g></svg></div>
<div class="t" style="left:1110.90px;top:492.50px;font-size:13.51px;line-height:13.51px;color:#424242;font-weight:400;font-family:'Liberation Sans',sans-serif;">Alexandra Rodriguez Estupiñan</div>
<svg class="a" style="left:1316px;top:489.5px;" width="17" height="17" viewBox="0 0 17 17"><rect x="5.3" y="1.1" width="5.3" height="9.6" rx="2.65" fill="none" stroke="#2e2e2e" stroke-width="1.05"/><path d="M2.6 8.3c0 2.9 2.4 5.1 5.4 5.1 1.5 0 2.9-.6 3.8-1.6M12.9 10.4c.2-.6.3-1.3.3-2.1M8 13.4V16" fill="none" stroke="#2e2e2e" stroke-width="1.05"/><path d="M0.6 0.9L15.6 15.9" stroke="#2e2e2e" stroke-width="1.05"/></svg>
<div class="a" style="left:1071px;top:530.5px;width:31px;height:31px;background:#dcd8ec;border-radius:50%"></div>
<div class="t" style="left:1082.30px;top:540.80px;font-size:12.6px;line-height:12.6px;color:#3e3680;font-weight:400;font-family:'Liberation Sans',sans-serif;transform:scaleX(0.9713);transform-origin:0 0;-webkit-text-stroke:0.4px #3e3680;">A</div>
<div class="t" style="left:1110.90px;top:540.00px;font-size:13.5px;line-height:13.5px;color:#424242;font-weight:400;font-family:'Liberation Sans',sans-serif;">Almacén - Santander - Bucara...</div>
<svg class="a" style="left:1316px;top:537.0px;" width="17" height="17" viewBox="0 0 17 17"><rect x="5.3" y="1.1" width="5.3" height="9.6" rx="2.65" fill="none" stroke="#2e2e2e" stroke-width="1.05"/><path d="M2.6 8.3c0 2.9 2.4 5.1 5.4 5.1 1.5 0 2.9-.6 3.8-1.6M12.9 10.4c.2-.6.3-1.3.3-2.1M8 13.4V16" fill="none" stroke="#2e2e2e" stroke-width="1.05"/><path d="M0.6 0.9L15.6 15.9" stroke="#2e2e2e" stroke-width="1.05"/></svg>
<div class="a" style="left:1071px;top:578.0px;width:31px;height:31px;background:#f4d6da;border-radius:50%"></div>
<div class="t" style="left:1082.30px;top:588.30px;font-size:12.6px;line-height:12.6px;color:#a43a4e;font-weight:400;font-family:'Liberation Sans',sans-serif;transform:scaleX(0.9713);transform-origin:0 0;-webkit-text-stroke:0.4px #a43a4e;">A</div>
<div class="t" style="left:1110.90px;top:587.50px;font-size:13.78px;line-height:13.78px;color:#424242;font-weight:400;font-family:'Liberation Sans',sans-serif;">Andrea (No comprobado)</div>
<svg class="a" style="left:1316px;top:584.5px;" width="17" height="17" viewBox="0 0 17 17"><rect x="5.3" y="1.1" width="5.3" height="9.6" rx="2.65" fill="none" stroke="#2e2e2e" stroke-width="1.05"/><path d="M2.6 8.3c0 2.9 2.4 5.1 5.4 5.1 1.5 0 2.9-.6 3.8-1.6M12.9 10.4c.2-.6.3-1.3.3-2.1M8 13.4V16" fill="none" stroke="#2e2e2e" stroke-width="1.05"/><path d="M0.6 0.9L15.6 15.9" stroke="#2e2e2e" stroke-width="1.05"/></svg>
<div class="a" style="left:1071px;top:625.5px;width:31px;height:31px;background:#dcd8ec;border-radius:50%"></div>
<div class="t" style="left:1077.50px;top:635.80px;font-size:12.6px;line-height:12.6px;color:#2f2b70;font-weight:400;font-family:'Liberation Sans',sans-serif;transform:scaleX(1.0566);transform-origin:0 0;-webkit-text-stroke:0.4px #2f2b70;">AA</div>
<div class="t" style="left:1110.90px;top:635.00px;font-size:13.76px;line-height:13.76px;color:#424242;font-weight:400;font-family:'Liberation Sans',sans-serif;">Andrea abad (No comprobado)</div>
<svg class="a" style="left:1316px;top:632.0px;" width="17" height="17" viewBox="0 0 17 17"><rect x="5.3" y="1.1" width="5.3" height="9.6" rx="2.65" fill="none" stroke="#2e2e2e" stroke-width="1.05"/><path d="M2.6 8.3c0 2.9 2.4 5.1 5.4 5.1 1.5 0 2.9-.6 3.8-1.6M12.9 10.4c.2-.6.3-1.3.3-2.1M8 13.4V16" fill="none" stroke="#2e2e2e" stroke-width="1.05"/><path d="M0.6 0.9L15.6 15.9" stroke="#2e2e2e" stroke-width="1.05"/></svg>
<div class="a" style="left:1071px;top:673.0px;width:31px;height:31px;background:#cddcec;border-radius:50%"></div>
<div class="t" style="left:1077.60px;top:683.30px;font-size:12.6px;line-height:12.6px;color:#24477a;font-weight:400;font-family:'Liberation Sans',sans-serif;-webkit-text-stroke:0.4px #24477a;">AO</div>
<div class="t" style="left:1110.90px;top:682.50px;font-size:13.42px;line-height:13.42px;color:#424242;font-weight:400;font-family:'Liberation Sans',sans-serif;">Andres Alexsaindre Arevalo Os...</div>
<svg class="a" style="left:1316px;top:679.5px;" width="17" height="17" viewBox="0 0 17 17"><rect x="5.3" y="1.1" width="5.3" height="9.6" rx="2.65" fill="none" stroke="#2e2e2e" stroke-width="1.05"/><path d="M2.6 8.3c0 2.9 2.4 5.1 5.4 5.1 1.5 0 2.9-.6 3.8-1.6M12.9 10.4c.2-.6.3-1.3.3-2.1M8 13.4V16" fill="none" stroke="#2e2e2e" stroke-width="1.05"/><path d="M0.6 0.9L15.6 15.9" stroke="#2e2e2e" stroke-width="1.05"/></svg>
<div class="a" style="left:1071px;top:720px;width:31px;height:31px;background:#e9d8d0;border-radius:50%"></div>
<div class="a" style="left:0px;top:728px;width:1366px;height:40px;background:#e8dad8"></div>
<div class="a" style="left:0px;top:728px;width:48px;height:40px;background:#d2d6da"></div>
<svg class="a" style="left:15px;top:739px;" width="18" height="18" viewBox="0 0 18 18"><path d="M1 3.1l6.6-.9v6.4H1zM8.4 2.1L17 .9v7.7H8.4zM1 9.4h6.6v6.4L1 14.9zM8.4 9.4H17v7.7l-8.6-1.2z" fill="#000"/></svg>
<div class="a" style="left:48px;top:728px;width:344px;height:40px;background:#fff;border:1px solid #c4c4c4;border-bottom:none"></div>
<svg class="a" style="left:59px;top:739px;" width="19" height="19" viewBox="0 0 19 19"><circle cx="11.5" cy="6.7" r="5.2" fill="none" stroke="#000" stroke-width="1.1"/><path d="M7.8 10.4L1.8 16.5" stroke="#000" stroke-width="1.2"/></svg>
<div class="t" style="left:87.03px;top:742.00px;font-size:14.65px;line-height:14.65px;color:#000;font-weight:400;font-family:'Liberation Sans',sans-serif;">Escribe aquí para buscar.</div>
<svg class="a" style="left:339px;top:736px" width="26" height="26" viewBox="0 0 26 26"><circle cx="13" cy="13" r="12" fill="#fff" stroke="#555" stroke-width=".6" stroke-dasharray="1 1.2"/><path d="M13 2.5A10.5 10.5 0 0 0 6 21" fill="none" stroke="#f2c200" stroke-width="1.3"/><path d="M13 2.5A10.5 10.5 0 0 1 22 18" fill="none" stroke="#2f62c0" stroke-width="1.3"/><path d="M6 21A10.5 10.5 0 0 0 22 18" fill="none" stroke="#e03030" stroke-width="1.3"/><path d="M8 8h10v7c0 3-2.5 5-5 6-2.5-1-5-3-5-6z" fill="#e6b82e"/><path d="M9 11h8v3H9z" fill="#3b7a3a"/><path d="M9.5 14h7c0 2-1.5 3.5-3.5 4.5-2-1-3.5-2.5-3.5-4.5z" fill="#2a5aa8"/><path d="M5 19 C8 22 18 22 21 19" fill="none" stroke="#d23a2a" stroke-width="1.2"/></svg>
<svg class="a" style="left:406px;top:738px;" width="20" height="19" viewBox="0 0 20 19"><path d="M2.5 5.2V2.6h10.3v2.6M2.5 13.8v2.6h10.3v-2.6" fill="none" stroke="#000" stroke-width="1.1"/><rect x="15.9" y="5.8" width="2" height="2" fill="#000"/><path d="M16.9 9.2v7.4" stroke="#000" stroke-width="1.1"/></svg>
<svg class="a" style="left:454px;top:735px" width="26" height="26" viewBox="0 0 26 26"><defs><linearGradient id="eg" x1="0" y1="0" x2="1" y2="1"><stop offset="0" stop-color="#1aa0e0"/><stop offset=".55" stop-color="#36c5a0"/><stop offset="1" stop-color="#5ad06a"/></linearGradient></defs><path d="M13 1.5C19.5 1.5 24.5 6 24.5 11.5c0 3.3-2.4 5.4-5.6 5.4-2.1 0-3.8-.8-3.8-2.2 0-.6.6-1.1.6-2.3 0-2.5-2.3-4.6-5.4-4.6-3.8 0-6.6 3.1-6.6 7.2 0 4.7 3.8 9 9.4 9.5C5.5 25 1.5 19.8 1.5 13.4 1.5 6.8 6.5 1.5 13 1.5z" fill="url(#eg)"/><path d="M12.5 24.5c-5 0-8.8-3.8-8.8-8.5 0-3.5 2.5-6.3 5.8-6.3 2.6 0 4.4 1.6 4.4 3.6 0 1.1-.5 1.7-.5 2.3 0 2 2.3 3.4 5.2 3.4 1.9 0 3.6-.6 5-1.6-1.5 4.4-5.8 7.1-11.1 7.1z" fill="#1060b0"/><rect x="1.5" y="15.5" width="11" height="9" rx="1" fill="#c07a2a"/><rect x="5" y="13.8" width="4" height="2" fill="none" stroke="#8a5a1a" stroke-width=".8"/><rect x="1.5" y="18.5" width="11" height="1" fill="#8a5010"/><rect x="6.2" y="18" width="1.6" height="2" fill="#f2c040"/></svg>
<svg class="a" style="left:503px;top:736px" width="26" height="24" viewBox="0 0 26 24"><path d="M1 8.5L13 1l12 7.5V23H1z" fill="#0a5cb0"/><path d="M3.5 9.5h19v6l-9.5 5-9.5-5z" fill="#f2f2f2"/><path d="M1 9l12 7.5L25 9v14H1z" fill="#2ea8e8"/><path d="M1 23l12-7 12 7z" fill="#1888d8"/></svg>
<svg class="a" style="left:552px;top:735px" width="26" height="26" viewBox="0 0 26 26"><circle cx="13" cy="13" r="12" fill="#de3b30"/><path d="M13 13 L23.4 7 A12 12 0 0 1 13 25 Z" fill="#f8c520"/><path d="M13 13 L13 25 A12 12 0 0 1 2.6 7 Z" fill="#2ba24c"/><path d="M13 13 L2.6 7 A12 12 0 0 1 23.4 7 Z" fill="#de3b30"/><circle cx="13" cy="13" r="5.6" fill="#fff"/><circle cx="13" cy="13" r="4.4" fill="#1a73e8"/></svg>
<div class="a" style="left:545px;top:766px;width:40px;height:2px;background:#0f6cbd"></div>
<svg class="a" style="left:601px;top:736px" width="26" height="24" viewBox="0 0 26 24"><circle cx="21.5" cy="4.5" r="2.8" fill="#7b83eb"/><path d="M17.5 8.5h7.5v7a3.8 3.8 0 0 1-7.5 0z" fill="#5059c9"/><circle cx="14" cy="3.6" r="3.5" fill="#7b83eb"/><path d="M8.5 8h11v9.3a5.5 5.5 0 0 1-11 0z" fill="#7b83eb"/><rect x="1" y="5.5" width="12.5" height="12.5" rx="1.2" fill="#4b53bc"/><path d="M3.8 8.3h7v1.6H8.2v5.8H6.4V9.9H3.8z" fill="#fff"/></svg>
<svg class="a" style="left:650px;top:736px" width="26" height="24" viewBox="0 0 26 24"><rect x="7" y="1" width="18" height="22" rx="1.5" fill="#41a5ee"/><rect x="7" y="6.5" width="18" height="5.5" fill="#2b7cd3"/><rect x="7" y="12" width="18" height="5.5" fill="#185abd"/><path d="M7 17.5h18v4a1.5 1.5 0 0 1-1.5 1.5H8.5A1.5 1.5 0 0 1 7 21.5z" fill="#103f91"/><rect x="1" y="5.5" width="13" height="13" rx="1.2" fill="#185abd"/><path d="M3 8.5h1.8l1.1 5 1.2-5h1.5l1.2 5 1.1-5h1.7L10.5 16H9l-1.4-5-1.3 5H4.9z" fill="#fff"/></svg>
<div class="a" style="left:643px;top:766px;width:32px;height:2px;background:#0f6cbd"></div>
<div class="a" style="left:675px;top:766px;width:8px;height:2px;background:#8cb4de"></div>
<svg class="a" style="left:698px;top:735px" width="28" height="26" viewBox="0 0 28 26"><path d="M3 14c0-5 5-8 10-8 5 0 8 2 8 5 0 2-2 2.5-3.5 2.5s-2.5 1-1.5 2.5c1 1.5 0 4-3 4.5C7 21.5 3 19 3 14z" fill="#d4dde6" stroke="#8a9aaa" stroke-width=".7"/><circle cx="8" cy="12" r="1.6" fill="#e04848"/><circle cx="11.5" cy="9" r="1.6" fill="#48b04a"/><circle cx="15.5" cy="9" r="1.6" fill="#f0c040"/><circle cx="7.5" cy="16" r="1.6" fill="#3a7ad8"/><path d="M12 23L24 4" stroke="#d08a30" stroke-width="2.2"/><path d="M22.5 6L25.5 1.5" stroke="#8a6a40" stroke-width="2.5"/></svg>
<svg class="a" style="left:747px;top:736px" width="36" height="28" viewBox="0 0 36 28"><path d="M13 1.8C19.1 1.8 24 6.7 24 12.8s-4.9 11-11 11c-2 0-3.8-.5-5.4-1.4L2 24l1.6-5.4C2.6 16.9 2 14.9 2 12.8 2 6.7 6.9 1.8 13 1.8z" fill="none" stroke="#25a244" stroke-width="2.2"/><path d="M9 8.5c.5-.8 1.3-.9 1.7-.2l.9 2c.2.4 0 .9-.4 1.2-.3.3-.3.6 0 1 .8 1.2 1.7 2 2.8 2.6.4.2.7.1 1-.2.4-.5.9-.6 1.3-.4l1.9.9c.6.3.5 1.1-.2 1.7-1.2 1-3 .9-5-.4-2-1.3-3.6-3.2-4.2-5-.4-1.4-.3-2.4.2-3.2z" fill="#25a244"/><circle cx="26.5" cy="19" r="7.6" fill="#cfcfcf" stroke="#3a3a3a" stroke-width=".9"/><text x="26.5" y="23.6" text-anchor="middle" font-family="Liberation Sans" font-size="12.5" fill="#1a1a1a">7</text></svg>
<svg class="a" style="left:798px;top:737px" width="24" height="21" viewBox="0 0 24 21"><path d="M1 2.5c0-.8.7-1.5 1.5-1.5h6l2 2.2h11c.8 0 1.5.7 1.5 1.5V6H1z" fill="#e3a21a"/><rect x="1" y="5" width="22" height="15" rx="1" fill="#f8d56a"/><path d="M6.5 20v-6h11v6h-3.2v-3h-4.6v3z" fill="#1a72c8"/><rect x="6.5" y="12.5" width="11" height="2" fill="#2a92e8"/></svg>
<div class="a" style="left:790px;top:766px;width:40px;height:2px;background:#0f6cbd"></div>
<svg class="a" style="left:846px;top:736px" width="26" height="24" viewBox="0 0 26 24"><rect x="7" y="1" width="18" height="22" rx="1.5" fill="#33c481"/><rect x="7" y="6.5" width="18" height="5.5" fill="#21a366"/><rect x="7" y="12" width="18" height="5.5" fill="#107c41"/><path d="M7 17.5h18v4a1.5 1.5 0 0 1-1.5 1.5H8.5A1.5 1.5 0 0 1 7 21.5z" fill="#185c37"/><rect x="1" y="5.5" width="13" height="13" rx="1.2" fill="#107c41"/><path d="M4 8.3h2.1l1.5 2.6 1.5-2.6h2l-2.5 3.7 2.6 3.8h-2.1l-1.6-2.7-1.6 2.7H4l2.6-3.8z" fill="#fff"/></svg>
<div class="a" style="left:839px;top:766px;width:40px;height:2px;background:#0f6cbd"></div>
<div class="a" style="left:884px;top:728px;width:48px;height:40px;background:#f7b48a"></div>
<div class="a" style="left:929px;top:728px;width:3px;height:40px;background:#ee9a5c"></div>
<div class="a" style="left:884px;top:766px;width:48px;height:2px;background:#f08a3c"></div>
<svg class="a" style="left:894px;top:736px" width="36" height="28" viewBox="0 0 36 28"><circle cx="21.5" cy="4.5" r="2.8" fill="#7b83eb"/><path d="M17.5 8.5h7.5v7a3.8 3.8 0 0 1-7.5 0z" fill="#5059c9"/><circle cx="14" cy="3.6" r="3.5" fill="#7b83eb"/><path d="M8.5 8h11v9.3a5.5 5.5 0 0 1-11 0z" fill="#7b83eb"/><rect x="1" y="5.5" width="12.5" height="12.5" rx="1.2" fill="#4b53bc"/><path d="M3.8 8.3h7v1.6H8.2v5.8H6.4V9.9H3.8z" fill="#fff"/><circle cx="20.5" cy="18" r="8.3" fill="#c42b1c"/><text x="20.5" y="22.3" text-anchor="middle" font-family="Liberation Sans" font-size="12" fill="#fff">9+</text></svg>
<svg class="a" style="left:1018px;top:739px;" width="26" height="18" viewBox="0 0 26 18"><path d="M2.2 1.5h18.3v14.2c0 .8.7 1.5 1.5 1.5s1.5-.7 1.5-1.5V4.5h-3" fill="none" stroke="#000" stroke-width="1.5"/><path d="M2.2 1.5v14.2c0 .8.7 1.3 1.5 1.3H22" fill="none" stroke="#000" stroke-width="1.5"/><rect x="5" y="7" width="5" height="5" fill="none" stroke="#000" stroke-width="1.3"/><path d="M12 5h6M12 8.5h6M12 12h6" stroke="#000" stroke-width="1.3"/></svg>
<svg class="a" style="left:1067px;top:742px;" width="16" height="11" viewBox="0 0 16 11"><path d="M2 9l6-6 6 6" fill="none" stroke="#000" stroke-width="1.2"/></svg>
<svg class="a" style="left:1092px;top:739px;" width="15" height="18" viewBox="0 0 15 18"><rect x="2.3" y="5" width="7" height="8" rx="1.8" fill="none" stroke="#000" stroke-width="1.1"/><path d="M9.3 8l3-2v6l-3-2" fill="none" stroke="#000" stroke-width="1.1"/><path d="M3 2.3c2-1.2 5-1.2 7 0M3 15.7c2 1.2 5 1.2 7 0" fill="none" stroke="#000" stroke-width="1.1"/></svg>
<svg class="a" style="left:1116px;top:739px;" width="14" height="18" viewBox="0 0 14 18"><rect x="3.6" y="0.8" width="6.5" height="11.5" rx="3.2" fill="#000"/><path d="M1.6 8.5c0 3 2.4 5.3 5.3 5.3s5.3-2.3 5.3-5.3M6.9 13.8v2.8M3.5 16.8h6.8" fill="none" stroke="#000" stroke-width="1.1"/></svg>
<svg class="a" style="left:1138px;top:741px;" width="19" height="13" viewBox="0 0 19 13"><path d="M2.5 1v2.5M5 1v2.5M1.5 3.5h4.6v2.3c0 1.2-1 2.2-2.3 2.2S1.5 7 1.5 5.8zM3.8 8v4.5" fill="none" stroke="#000" stroke-width="1.1"/><rect x="5.5" y="3" width="11.3" height="8.5" rx=".8" fill="none" stroke="#000" stroke-width="1.1"/><rect x="7" y="4.5" width="7" height="5.5" fill="#000"/><rect x="17" y="5.5" width="1.3" height="3.5" fill="#000"/></svg>
<svg class="a" style="left:1162px;top:741px;" width="18" height="15" viewBox="0 0 18 15"><rect x="3" y="1" width="13.8" height="9.5" fill="none" stroke="#000" stroke-width="1.1"/><path d="M10 10.5v2.5M6.5 13.5h7" stroke="#000" stroke-width="1.1"/><rect x="0.6" y="0.6" width="4.5" height="3.5" fill="#e8dad8" stroke="#000" stroke-width="1"/><path d="M2.8 4.1v10" stroke="#000" stroke-width="1.1"/></svg>
<svg class="a" style="left:1186px;top:740px;" width="20" height="16" viewBox="0 0 20 16"><path d="M1.3 5.5h3l4-3.8v12.6l-4-3.8h-3z" fill="none" stroke="#000" stroke-width="1.1"/><path d="M10.7 5.8c.8.6 1.2 1.3 1.2 2.2s-.4 1.6-1.2 2.2" fill="none" stroke="#000" stroke-width="1.1"/><path d="M13 3.6c1.3 1.2 2 2.7 2 4.4s-.7 3.2-2 4.4M15.4 1.5c1.8 1.8 2.8 4 2.8 6.5s-1 4.7-2.8 6.5" fill="none" stroke="#777" stroke-width="1"/></svg>
<div class="t" style="left:1214.53px;top:741.70px;font-size:12.3px;line-height:12.3px;color:#000;font-weight:400;font-family:'Liberation Sans',sans-serif;transform:scaleX(0.7852);transform-origin:0 0;">ESP</div>
<div class="t" style="left:1252.74px;top:733.90px;font-size:11.44px;line-height:11.44px;color:#000;font-weight:400;font-family:'Liberation Sans',sans-serif;">8:12 a. m.</div>
<div class="t" style="left:1249.09px;top:751.90px;font-size:11.55px;line-height:11.55px;color:#000;font-weight:400;font-family:'Liberation Sans',sans-serif;">15/08/2024</div>
<svg class="a" style="left:1323px;top:738px" width="30" height="28" viewBox="0 0 30 28"><path d="M2 2h15.5v11.5H8l-3.5 3.3v-3.3H2z" fill="#000"/><path d="M4.5 5h10.5M4.5 7.8h10.5M4.5 10.5h10.5" stroke="#e8dad8" stroke-width="1.1"/><circle cx="17.5" cy="17.3" r="7.6" fill="#d0d0d0" stroke="#6a6a6a" stroke-width=".9"/><text x="17.5" y="21.8" text-anchor="middle" font-family="Liberation Sans" font-size="12.5" fill="#1a1a1a">2</text></svg>
<div class="a" style="left:1361px;top:728px;width:1px;height:40px;background:#b8acaa"></div>
</body></html>
